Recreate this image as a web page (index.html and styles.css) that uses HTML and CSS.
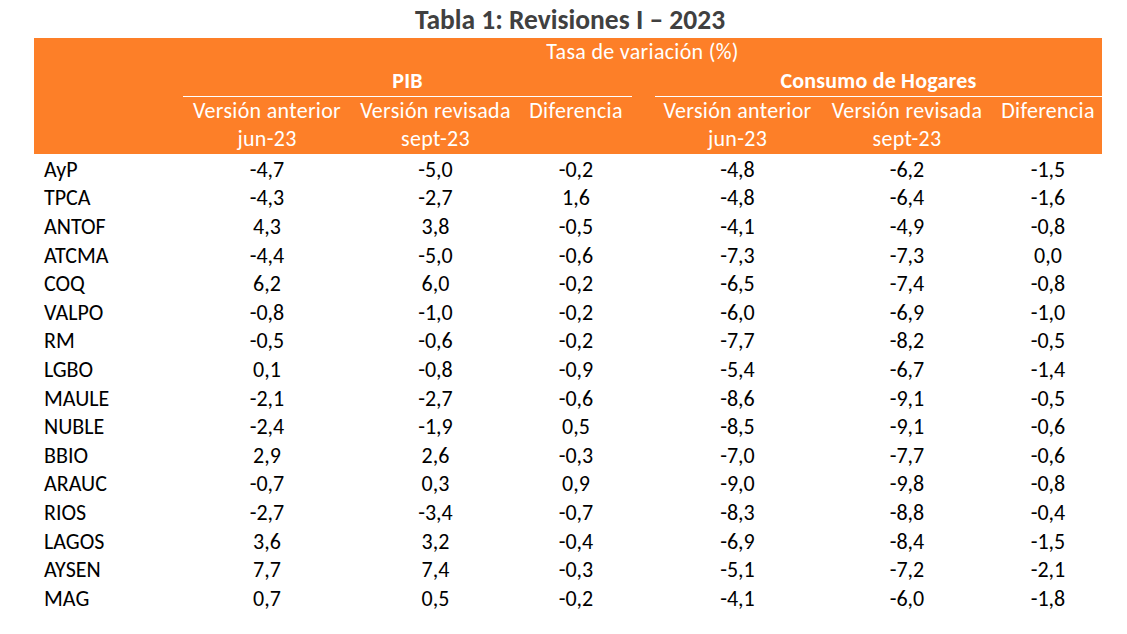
FILE: index.html
```html
<!DOCTYPE html>
<html lang="es">
<head>
<meta charset="utf-8">
<title>Tabla 1: Revisiones I – 2023</title>
<link rel="stylesheet" href="styles.css">
</head>
<body>
<div class="page">
  <h1 class="title">Tabla 1: Revisiones I – 2023</h1>
  <table class="rev">
    <colgroup>
      <col class="c-label">
      <col class="c-a">
      <col class="c-b">
      <col class="c-c">
      <col class="c-gap">
      <col class="c-d">
      <col class="c-e">
      <col class="c-f">
    </colgroup>
    <thead>
      <tr class="hr1">
        <th></th>
        <th colspan="7" class="tasa">Tasa de variación (%)</th>
      </tr>
      <tr class="hr2">
        <th></th>
        <th colspan="3" class="grp">PIB</th>
        <th></th>
        <th colspan="3" class="grp">Consumo de Hogares</th>
      </tr>
      <tr class="hr3">
        <th></th>
        <th>Versión anterior</th>
        <th>Versión revisada</th>
        <th>Diferencia</th>
        <th></th>
        <th>Versión anterior</th>
        <th>Versión revisada</th>
        <th>Diferencia</th>
      </tr>
      <tr class="hr4">
        <th></th>
        <th>jun-23</th>
        <th>sept-23</th>
        <th></th>
        <th></th>
        <th>jun-23</th>
        <th>sept-23</th>
        <th></th>
      </tr>
    </thead>
    <tbody>
      <tr><td class="lbl">AyP</td><td>-4,7</td><td>-5,0</td><td>-0,2</td><td></td><td>-4,8</td><td>-6,2</td><td>-1,5</td></tr>
      <tr><td class="lbl">TPCA</td><td>-4,3</td><td>-2,7</td><td>1,6</td><td></td><td>-4,8</td><td>-6,4</td><td>-1,6</td></tr>
      <tr><td class="lbl">ANTOF</td><td>4,3</td><td>3,8</td><td>-0,5</td><td></td><td>-4,1</td><td>-4,9</td><td>-0,8</td></tr>
      <tr><td class="lbl">ATCMA</td><td>-4,4</td><td>-5,0</td><td>-0,6</td><td></td><td>-7,3</td><td>-7,3</td><td>0,0</td></tr>
      <tr><td class="lbl">COQ</td><td>6,2</td><td>6,0</td><td>-0,2</td><td></td><td>-6,5</td><td>-7,4</td><td>-0,8</td></tr>
      <tr><td class="lbl">VALPO</td><td>-0,8</td><td>-1,0</td><td>-0,2</td><td></td><td>-6,0</td><td>-6,9</td><td>-1,0</td></tr>
      <tr><td class="lbl">RM</td><td>-0,5</td><td>-0,6</td><td>-0,2</td><td></td><td>-7,7</td><td>-8,2</td><td>-0,5</td></tr>
      <tr><td class="lbl">LGBO</td><td>0,1</td><td>-0,8</td><td>-0,9</td><td></td><td>-5,4</td><td>-6,7</td><td>-1,4</td></tr>
      <tr><td class="lbl">MAULE</td><td>-2,1</td><td>-2,7</td><td>-0,6</td><td></td><td>-8,6</td><td>-9,1</td><td>-0,5</td></tr>
      <tr><td class="lbl">NUBLE</td><td>-2,4</td><td>-1,9</td><td>0,5</td><td></td><td>-8,5</td><td>-9,1</td><td>-0,6</td></tr>
      <tr><td class="lbl">BBIO</td><td>2,9</td><td>2,6</td><td>-0,3</td><td></td><td>-7,0</td><td>-7,7</td><td>-0,6</td></tr>
      <tr><td class="lbl">ARAUC</td><td>-0,7</td><td>0,3</td><td>0,9</td><td></td><td>-9,0</td><td>-9,8</td><td>-0,8</td></tr>
      <tr><td class="lbl">RIOS</td><td>-2,7</td><td>-3,4</td><td>-0,7</td><td></td><td>-8,3</td><td>-8,8</td><td>-0,4</td></tr>
      <tr><td class="lbl">LAGOS</td><td>3,6</td><td>3,2</td><td>-0,4</td><td></td><td>-6,9</td><td>-8,4</td><td>-1,5</td></tr>
      <tr><td class="lbl">AYSEN</td><td>7,7</td><td>7,4</td><td>-0,3</td><td></td><td>-5,1</td><td>-7,2</td><td>-2,1</td></tr>
      <tr><td class="lbl">MAG</td><td>0,7</td><td>0,5</td><td>-0,2</td><td></td><td>-4,1</td><td>-6,0</td><td>-1,8</td></tr>
    </tbody>
  </table>
</div>
</body>
</html>
```

FILE: styles.css
```css
html, body {
  margin: 0;
  padding: 0;
  background: #ffffff;
}

body {
  font-family: Carlito, Calibri, Lato, "Noto Sans", sans-serif;
  color: #000000;
}

.page {
  width: 1068px;
  padding-left: 34px;
}

.title {
  margin: 0;
  height: 38px;
  font-size: 27.5px;
  line-height: 40px;
  font-weight: 700;
  color: #404040;
  text-align: center;
  padding-left: 4px;
  box-sizing: border-box;
}

.rev {
  width: 1068px;
  table-layout: fixed;
  border-collapse: collapse;
  border-spacing: 0;
  font-size: 22px;
}

.c-label { width: 149px; }
.c-a { width: 168px; }
.c-b { width: 169px; }
.c-c { width: 112px; }
.c-gap { width: 23px; }
.c-d { width: 165px; }
.c-e { width: 174px; }
.c-f { width: 108px; }

.rev th,
.rev td {
  padding: 0;
  white-space: nowrap;
  text-align: center;
  vertical-align: middle;
}

.rev thead {
  background: #fd7f28;
  color: #ffffff;
}

.rev thead th {
  font-weight: 400;
  height: 28.8px;
  line-height: 28.8px;
  letter-spacing: 0.3px;
}

.rev thead th.grp {
  font-weight: 700;
  border-bottom: 1px solid #ffffff;
  letter-spacing: 0.2px;
}

.rev tbody td {
  height: 28.6px;
  line-height: 26px;
  padding-top: 2.6px;
  box-sizing: border-box;
}

.rev tbody td.lbl {
  text-align: left;
  padding-left: 10px;
}
```
